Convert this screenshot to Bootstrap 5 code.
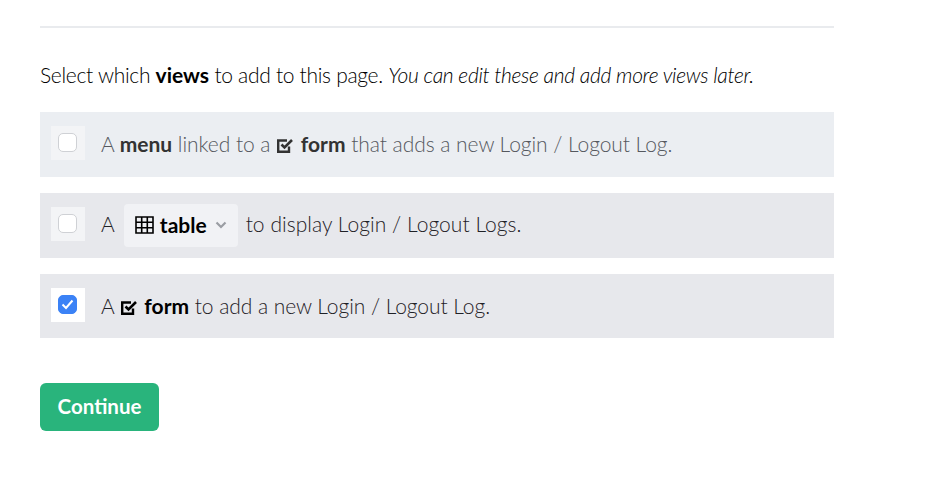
<!DOCTYPE html>
<html><head><meta charset="utf-8">
<link href="https://cdn.jsdelivr.net/npm/bootstrap@5.3.0/dist/css/bootstrap.min.css" rel="stylesheet">
<style>
body{font-family:Lato,sans-serif;font-size:21px;color:#2b2d31;background:#fff;overflow:hidden}
.wrap{width:794px;margin-left:40px;padding-top:26px}
.rule{border-top:2px solid #e9ebee;height:0;margin-bottom:33px}
.intro{line-height:28px;margin-bottom:23px;color:#000;font-weight:300;letter-spacing:-.3px;white-space:pre}
.intro b{color:#000;font-weight:700;letter-spacing:0}
.vrow{height:65px;margin-bottom:16px;padding:14px 11px 0;align-items:flex-start;font-weight:300;letter-spacing:-.05px}
.vrow b{font-weight:700;letter-spacing:0}
.vrow:last-of-type{height:64px}
.faded{background:#ebeef2;color:#55585e}
.faded b{color:#333}
.solid{background:#e7e8ec;color:#1f2126}
.solid b{color:#000}
.chk{width:34px;height:34px;margin-right:16px;flex:none;background:#f3f4f6;padding:7px}
.chk.on{background:#fff}
.box{width:19px;height:19px;border:1.5px solid #cfd1d5;border-radius:5px;background:#fff;display:block}
.box.on{background:#3b82f6;border-color:#3b82f6;display:flex;align-items:center;justify-content:center}
.txt{line-height:34px;padding-top:1px;white-space:pre}
.txt.after{letter-spacing:.05px;padding-top:0}
.pick{background:#f1f2f5;border-radius:4px;height:43px;padding:0 11px 1px;margin:-3px 8px 0 9px;color:#000}
.ico{display:inline-block;vertical-align:-1px;margin:0 2px 0 1px}
.tbl{margin-right:6px}
.chev{margin-left:8px}
.go{background:#29b47c;border:0;color:#fff;font-weight:700;font-size:20.5px;width:119px;height:48px;margin-top:29px;border-radius:6px;padding:0 0 2px}
.go:hover{background:#29b47c;color:#fff}
</style></head><body>
<div class="wrap">
<div class="rule"></div>
<p class="intro">Select which <b>views</b> to add to this page. <i>You can edit these and add more views later.</i></p>
<div class="vrow faded d-flex"><span class="chk"><span class="box"></span></span><span class="txt">A <b>menu</b> linked to a <svg class="ico" width="16" height="15" viewBox="0 0 16 15"><path d="M12 8.500V13.800H1.200V2.500H10" fill="none" stroke="#333" stroke-width="2.400"/><path d="M4.500 6.500l3 3L15 2" fill="none" stroke="#333" stroke-width="2.600"/></svg> <b>form</b> that adds a new Login / Logout Log.</span></div>
<div class="vrow solid d-flex"><span class="chk"><span class="box"></span></span><span class="txt after">A</span><span class="pick d-flex align-items-center"><svg class="tbl" width="19" height="18" viewBox="0 0 19 18"><path d="M1 1h17v16H1zM1 6.300h17M1 11.700h17M6.700 1v16M12.300 1v16" fill="none" stroke="#000" stroke-width="1.600"/></svg><b>table</b><svg class="chev" width="12" height="8" viewBox="0 0 12 8"><path d="M1.500 1.500l4.500 4.500 4.500-4.500" fill="none" stroke="#9a9da3" stroke-width="2.200"/></svg></span><span class="txt after">to display Login / Logout Logs.</span></div>
<div class="vrow solid d-flex"><span class="chk on"><span class="box on"><svg width="13" height="11" viewBox="0 0 13 11"><path d="M1.500 5.500l3.500 3.500 6.500-7.500" fill="none" stroke="#fff" stroke-width="2"/></svg></span></span><span class="txt">A <svg class="ico" width="16" height="15" viewBox="0 0 16 15"><path d="M12 8.500V13.800H1.200V2.500H10" fill="none" stroke="#000" stroke-width="2.400"/><path d="M4.500 6.500l3 3L15 2" fill="none" stroke="#000" stroke-width="2.600"/></svg> <b>form</b> to add a new Login / Logout Log.</span></div>
<button class="btn go" type="button">Continue</button>
</div>
</body></html>
